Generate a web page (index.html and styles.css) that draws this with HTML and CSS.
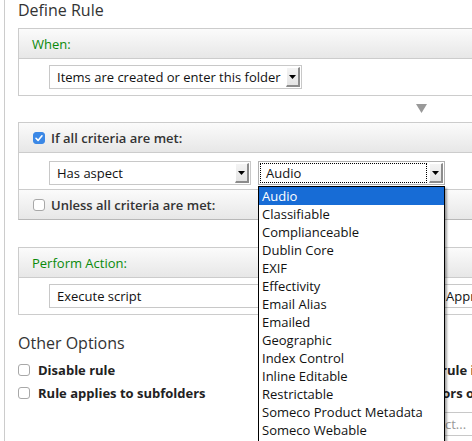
FILE: index.html
```html
<!DOCTYPE html>
<html>
<head>
<meta charset="utf-8">
<link rel="stylesheet" href="styles.css">
</head>
<body>
<div class="page">
  <h1 class="title">Define Rule</h1>

  <section class="panel">
    <div class="phead"><span class="green">When:</span></div>
    <div class="pbody">
      <div class="sel sel-items"><span class="sel-text">Items are created or enter this folder</span><span class="btn"><svg width="7" height="4" viewBox="0 0 7 4"><polygon points="0,0 7,0 3.5,4" fill="#000"/></svg></span></div>
    </div>
  </section>

  <div class="arrowrow"><svg class="tri" width="11" height="9" viewBox="0 0 11 9"><polygon points="0,0 11,0 5.5,9" fill="#999"/></svg></div>

  <section class="panel panel-criteria">
    <div class="phead"><span class="cb checked"><svg width="12" height="12" viewBox="0 0 12 12"><path d="M3 6.3 L5.1 8.4 L9 3.8" fill="none" stroke="#fff" stroke-width="1.6" stroke-linecap="round" stroke-linejoin="round"/></svg></span><span class="hbold">If all criteria are met:</span></div>
    <div class="pbody pbody-crit">
      <div class="sel sel-aspect"><span class="sel-text">Has aspect</span><span class="btn"><svg width="7" height="4" viewBox="0 0 7 4"><polygon points="0,0 7,0 3.5,4" fill="#000"/></svg></span></div>
      <div class="sel sel-audio focus"><span class="sel-text">Audio</span><span class="btn"><svg width="7" height="4" viewBox="0 0 7 4"><polygon points="0,0 7,0 3.5,4" fill="#000"/></svg></span>
        <ul class="dropdown">
          <li class="dd-item active">Audio</li>
          <li class="dd-item">Classifiable</li>
          <li class="dd-item">Complianceable</li>
          <li class="dd-item">Dublin Core</li>
          <li class="dd-item">EXIF</li>
          <li class="dd-item">Effectivity</li>
          <li class="dd-item">Email Alias</li>
          <li class="dd-item">Emailed</li>
          <li class="dd-item">Geographic</li>
          <li class="dd-item">Index Control</li>
          <li class="dd-item">Inline Editable</li>
          <li class="dd-item">Restrictable</li>
          <li class="dd-item">Someco Product Metadata</li>
          <li class="dd-item">Someco Webable</li>
          <li class="dd-item">Summarizable</li>
        </ul>
      </div>
    </div>
    <div class="phead phead-last"><span class="cb"></span><span class="hbold">Unless all criteria are met:</span></div>
  </section>

  <section class="panel panel-action">
    <div class="phead"><span class="green">Perform Action:</span></div>
    <div class="pbody pbody-action">
      <div class="sel sel-exec"><span class="sel-text">Execute script</span><span class="btn"><svg width="7" height="4" viewBox="0 0 7 4"><polygon points="0,0 7,0 3.5,4" fill="#000"/></svg></span></div>
      <div class="sel sel-appr"><span class="sel-text">Approve and Reject</span></div>
    </div>
  </section>

  <h2 class="subtitle">Other Options</h2>
  <div class="options">
    <div class="opt-col">
      <label class="opt"><span class="cb"></span><span>Disable rule</span></label>
      <label class="opt"><span class="cb"></span><span>Rule applies to subfolders</span></label>
    </div>
    <div class="opt-col opt-right">
      <label class="opt"><span class="cb"></span><span>Run rule in background</span></label>
      <label class="opt opt-err"><span class="cb"></span><span>If errors occur run script</span></label>
      <div class="sel sel-script"><span class="sel-text placeholder">Select...</span></div>
    </div>
  </div>
</div>
</body>
</html>
```

FILE: styles.css
```css
html, body {
  margin: 0;
  padding: 0;
  background: #fff;
  overflow: hidden;
}
body {
  font-family: "Open Sans", "DejaVu Sans", sans-serif;
  font-size: 13px;
  color: #222;
}
.page {
  margin-left: 4px;
  border-left: 1px solid #cccccc;
  padding-left: 13px;
  min-height: 441px;
  box-sizing: border-box;
}
.title {
  margin: 0 0 8px 0;
  font-size: 16px;
  line-height: 20px;
  font-weight: 400;
  color: #333;
}
.panel {
  width: 480px;
  border: 1px solid #cccccc;
  background: #fff;
}
.phead {
  height: 29px;
  display: flex;
  align-items: center;
  padding-left: 13px;
  background: linear-gradient(#fbfbfb, #e7e7e7);
  border-bottom: 1px solid #cccccc;
  line-height: 18px;
}
.phead-last {
  border-bottom: none;
}
.panel-criteria {
  border-bottom-color: #b8b8b8;
}
.green {
  color: #0a8a0a;
}
.hbold {
  font-weight: 600;
  color: #333;
}
.pbody {
  padding: 6px 30px;
  display: flex;
  gap: 7px;
}
.pbody-crit {
  padding: 8px 30px 4px 30px;
  border-bottom: 1px solid #cccccc;
}
.pbody-action {
  gap: 6px;
}
.arrowrow {
  height: 26px;
  padding-left: 398px;
  padding-top: 8px;
  box-sizing: border-box;
}
.tri {
  display: block;
}
.panel-action {
  margin-top: 27px;
}

/* selects */
.sel {
  position: relative;
  display: flex;
  height: 24px;
  box-sizing: border-box;
  border: 1px solid #c8c8c8;
  padding: 1px;
  background: #fff;
  flex: none;
}
.sel-text {
  flex: 1;
  padding: 1px 0 0 5px;
  line-height: 17px;
  border: 1px solid transparent;
  color: #111;
  white-space: nowrap;
  overflow: hidden;
}
.focus .sel-text {
  border: 1px dotted #000;
}
.btn {
  width: 11px;
  margin-left: 2px;
  background: linear-gradient(#f4f4f4, #e4e4e4);
  border-top: 1px solid #fff;
  border-left: 1px solid #fff;
  border-right: 2px solid #8c8c8c;
  border-bottom: 2px solid #8c8c8c;
  display: flex;
  align-items: center;
  justify-content: center;
}
.sel-items { width: 253px; }
.sel-aspect { width: 202px; }
.sel-audio { width: 187px; border-color: #b0b0b0; }
.sel-exec { width: 383px; }
.sel-appr { width: 200px; }
.sel-script { width: 200px; margin-left: 20px; margin-top: 5px; }
.placeholder { color: #999; }

/* dropdown overlay */
.dropdown {
  position: absolute;
  left: -1px;
  top: calc(100% + 2px);
  width: 187px;
  box-sizing: border-box;
  margin: 0;
  padding: 0;
  list-style: none;
  background: #fff;
  border: 1px solid #000;
  box-shadow: 2px 2px 2px rgba(0, 0, 0, 0.35);
  z-index: 10;
}
.dd-item {
  height: 18px;
  line-height: 18px;
  padding-left: 3px;
  color: #111;
  white-space: nowrap;
}
.dd-item.active {
  background: #176cd6;
  color: #fff;
}

/* checkboxes */
.cb {
  width: 12px;
  height: 12px;
  box-sizing: border-box;
  border: 1px solid #a8a8a8;
  border-radius: 3px;
  background: #fff;
  margin-left: 1px;
  margin-right: 6px;
  flex: none;
  display: flex;
}
.cb.checked {
  background: #3b88e6;
  border-color: #3b88e6;
}
.cb.checked svg {
  margin: -1px;
}

/* other options */
.subtitle {
  margin: 18px 0 8px 0;
  font-size: 16px;
  line-height: 20px;
  font-weight: 400;
  color: #333;
}
.options {
  display: grid;
  grid-template-columns: 374px 1fr;
}
.opt-col {
  display: flex;
  flex-direction: column;
  gap: 5px;
}
.opt {
  display: flex;
  align-items: center;
  height: 18px;
  font-weight: 700;
  color: #222;
  white-space: nowrap;
}
.opt .cb {
  margin-left: 0;
  margin-right: 8px;
}
.opt-err {
  margin-left: -2px;
}
```
